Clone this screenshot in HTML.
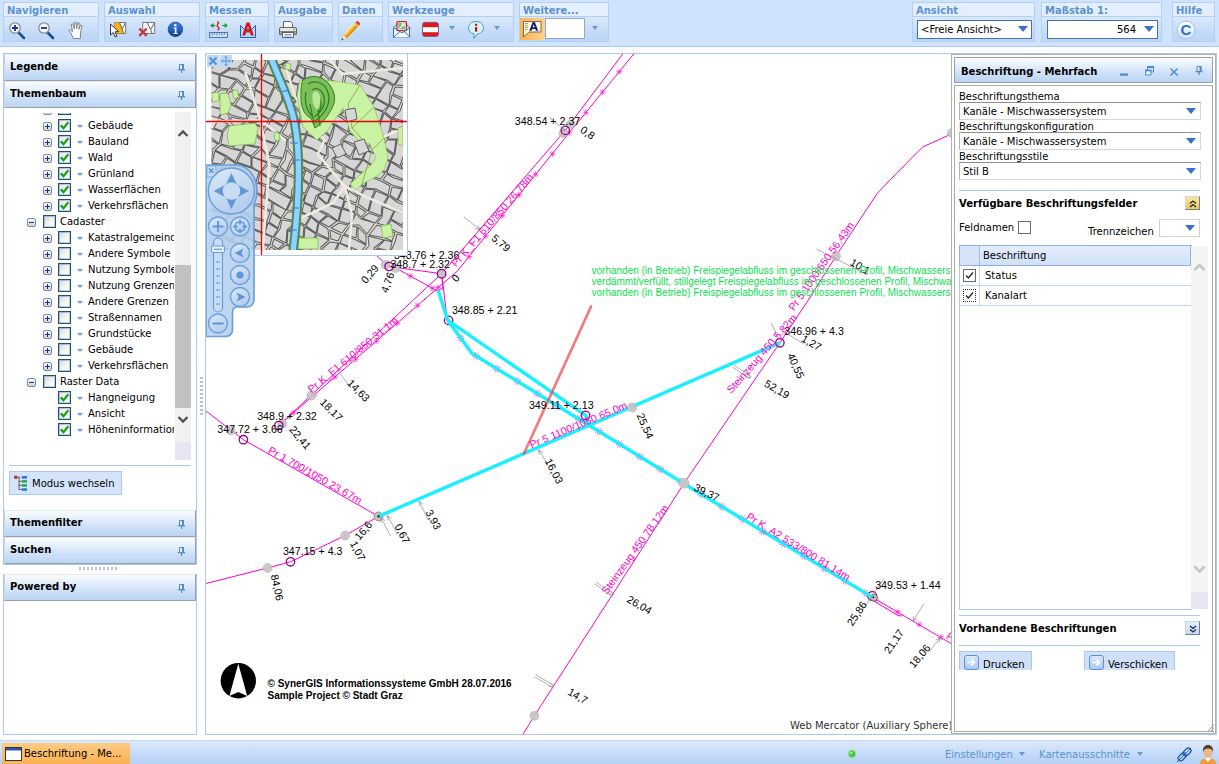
<!DOCTYPE html>
<html lang="de">
<head>
<meta charset="utf-8">
<title>WebOffice - Beschriftung - Mehrfach</title>
<style>
*{box-sizing:border-box;margin:0;padding:0}
html,body{width:1219px;height:764px;overflow:hidden;background:#fff}
body{position:relative;font-family:"DejaVu Sans","Liberation Sans",sans-serif;font-size:10px;color:#000}
.abs{position:absolute}
/* top toolbar */
#top{left:0;top:0;width:1219px;height:47px;background:#d0e3fc;border-bottom:1px solid #a9c9f0}
.grp{position:absolute;top:2px;height:40px;border:1px solid #b4d0f4;background:linear-gradient(#e3effd 0,#e3effd 13px,#dbe9fb 14px,#c3daf7 30px,#bdd6f6 100%)}
.grp .t{position:absolute;left:0;right:0;top:0;height:14px;border-bottom:1px solid #b4d0f4;color:#5c92cf;font-weight:bold;font-size:10px;line-height:13px;padding:1px 0 0 3px;white-space:nowrap;overflow:hidden}
.ico{position:absolute;top:17px;width:20px;height:20px}
/* left panel */
#left{left:3px;top:53px;width:194px;height:682px;border:1px solid #a9c9f0;background:#fff}
.hdr{position:absolute;left:0;width:192px;height:27px;border:1px solid #9a9ea8;border-top-color:#dfe9f7;border-left-color:#c5d6ee;background:linear-gradient(#fbfdff 0,#e6f0fc 30%,#cfe1f8 62%,#bad5f4 100%);font-weight:bold;font-size:10px;line-height:24px;padding-left:5px}
.pin{position:absolute;right:10px;top:9px;width:7px;height:9px}
.row{position:absolute;left:0;height:16px;line-height:16px;white-space:nowrap;font-size:10px}
.cb{position:absolute;width:13px;height:13px;border:1px solid #1c5180;box-shadow:inset 0 0 0 1px rgba(28,81,128,.28);background:linear-gradient(135deg,#d9d9d3,#fff 80%)}
.cb.on{background:linear-gradient(135deg,#e6e6e0,#fff 70%)}
.pm{position:absolute;width:9px;height:9px;border:1px solid #7b8aa5;border-radius:2px;background:linear-gradient(#fff,#c8d2e4)}
.dd{position:absolute;width:0;height:0;border-left:3px solid transparent;border-right:3px solid transparent;border-top:4px solid #5c92cf}
.tdd{position:absolute;width:0;height:0;border-left:3px solid transparent;border-right:3px solid transparent;border-top:3px solid #6b9fdb}
/* map */
#map{left:205px;top:53px;width:1012px;height:682px;border:1px solid #a9c9f0;background:#fff;overflow:hidden}
/* right panel */
#right{left:951px;top:53px;width:264px;height:682px}
/* bottom */
#bot{left:0;top:740px;width:1219px;height:24px;background:linear-gradient(#dce9fb,#b4d0f5);border-top:1px solid #c2d8f5}
.sel{position:absolute;height:19px;border:1px solid #4470b4;background:#fff;font-size:10px;line-height:17px;padding-left:3px;white-space:nowrap}
.sel i{position:absolute;right:3px;top:5px;width:0;height:0;border-left:5px solid transparent;border-right:5px solid transparent;border-top:6px solid #3a6fd0}
</style>
</head>
<body>
<!--TOP-->
<div id="top" class="abs">
 <div class="grp" style="left:3px;width:96px"><div class="t">Navigieren</div>
  <svg class="ico" style="left:3px" viewBox="0 0 20 20"><line x1="11" y1="12" x2="17" y2="18" stroke="#1d4e9e" stroke-width="2.6" stroke-linecap="round"/><circle cx="8" cy="8" r="5.2" fill="#f4f6fa" stroke="#8a8f98" stroke-width="1.3"/><path d="M5 8h6M8 5v6" stroke="#17328f" stroke-width="1.8"/></svg>
  <svg class="ico" style="left:32px" viewBox="0 0 20 20"><line x1="11" y1="12" x2="17" y2="18" stroke="#1d4e9e" stroke-width="2.6" stroke-linecap="round"/><circle cx="8" cy="8" r="5.2" fill="#f4f6fa" stroke="#8a8f98" stroke-width="1.3"/><path d="M5 8h6" stroke="#17328f" stroke-width="1.8"/></svg>
  <svg class="ico" style="left:62px" viewBox="0 0 20 20"><path d="M7.5 18.5 L4.5 12.5 L2.5 10.5 L3.8 9.6 L6.6 11.8 L5.2 4.2 L6.6 3.8 L8.4 9 L8.2 2.4 L9.8 2.2 L10.6 8.8 L11.6 2.8 L13.2 3 L12.9 9.4 L14.6 5 L16 5.6 L14.6 12 L14.4 18.5 Z" fill="#fff" stroke="#777b82" stroke-width="0.9" stroke-linejoin="round"/></svg>
 </div>
 <div class="grp" style="left:104px;width:96px"><div class="t">Auswahl</div>
  <svg class="ico" style="left:4px;top:16px" viewBox="0 0 20 20"><path d="M5.700 3.500h11v11h-11z" fill="#f7f7f7" stroke="#6c6c6c" stroke-width="0.900"/><path d="M5.700 3.500h4.900l3.900 10.800H7.200L5.700 10z" fill="#fbb414"/><path d="M10.600 3.800l2.500 6.200 3.400-6.200M13.100 10l1.400 4.500" stroke="#555" stroke-width="0.900" fill="none"/><path d="M1.500 5v11l2.700-2.500 2 4.500 1.800-.8-2-4.400 3.600-.2z" fill="#fff" stroke="#222" stroke-width="0.900" stroke-linejoin="round"/></svg>
  <svg class="ico" style="left:33px;top:16px" viewBox="0 0 20 20"><path d="M4.700 3.500h12v11h-12z" fill="#f7f7f7" stroke="#6c6c6c" stroke-width="0.900"/><path d="M9.200 3.800l3.400 6.700 3.900-6.700M12.600 10.500l1.500 4" stroke="#555" stroke-width="0.900" fill="none"/><path d="M1.300 9.500l7.400 7.400M8.700 9.500l-7.400 7.400" stroke="#c8353a" stroke-width="2.300"/></svg>
  <svg class="ico" style="left:61px;top:16px" viewBox="0 0 20 20"><defs><linearGradient id="ig" x1="0" y1="0" x2="0" y2="1"><stop offset="0" stop-color="#3b7fdc"/><stop offset="1" stop-color="#0f3f96"/></linearGradient></defs><circle cx="9.400" cy="10.400" r="7.300" fill="url(#ig)" stroke="#0f3f96" stroke-width="0.600"/><circle cx="9.300" cy="6.300" r="1.250" fill="#fff"/><path d="M7.700 8.600h2.800v5.400h1.200v1.100H7.500V14h1.300V9.700H7.700z" fill="#fff"/></svg>
 </div>
 <div class="grp" style="left:205px;width:64px"><div class="t">Messen</div>
  <svg class="ico" style="left:3px" viewBox="0 0 20 20"><path d="M8.500 1.500c3 1.500-2 3.500 0 5s2 2.500 0 3.500" stroke="#d8232a" stroke-width="1.500" fill="none"/><path d="M1 5.500l3.500-2.600v5.200zM19 5.500l-3.500-2.600v5.200z" fill="#1b9a2d"/><path d="M4 5.500h2.500M13 5.500h2.500" stroke="#1b9a2d" stroke-width="1.200"/><rect x="0.500" y="12.500" width="18" height="5" fill="#cfe0f7" stroke="#3f6fb5" stroke-width="0.9"/><path d="M3 12.500v3M5.500 12.500v2M8 12.500v3M10.500 12.500v2M13 12.500v3M15.500 12.500v2" stroke="#3f6fb5" stroke-width="0.8"/></svg>
  <svg class="ico" style="left:32px" viewBox="0 0 20 20"><path d="M2.500 5.500v12h15v-12l-4 4h-7z" fill="#b8d6f3" stroke="#2a5ca8" stroke-width="1"/><path d="M4.200 15.500L8.500 2.500h3l4.300 13h-3l-.9-3H8.100l-.9 3zM8.800 10.200h2.400L10 6z" fill="#d4151c"/></svg>
 </div>
 <div class="grp" style="left:274px;width:59px"><div class="t">Ausgabe</div>
  <svg class="ico" style="left:3px" viewBox="0 0 20 20"><path d="M5.500 1.500h7l2 2v5h-9z" fill="#fff" stroke="#555" stroke-width="0.9"/><rect x="1.500" y="7.500" width="17" height="7" rx="1.500" fill="#e8e6df" stroke="#555" stroke-width="0.9"/><rect x="1.500" y="11.500" width="17" height="3" fill="#a8a59a" stroke="#555" stroke-width="0.6"/><rect x="4.500" y="12.500" width="11" height="5" fill="#fff" stroke="#555" stroke-width="0.9"/><path d="M6.500 14.500h7M6.500 16h7" stroke="#5a8fd6" stroke-width="0.8"/><circle cx="16" cy="9.500" r="0.800" fill="#2fae3a"/></svg>
 </div>
 <div class="grp" style="left:338px;width:45px"><div class="t">Daten</div>
  <svg class="ico" style="left:2px" viewBox="0 0 20 20"><path d="M2.300 15.200L14.800 2.200l3.600 3.400L5.900 18.600z" fill="#f6b320"/><path d="M3.200 14.400L15.600 1.600" stroke="#fde39a" stroke-width="1.600"/><path d="M5 17.800L17.500 4.800" stroke="#d88a10" stroke-width="1.300"/><path d="M14.300 2.700l1.400-1.500c1-.9 4 1.900 3.200 3l-1.400 1.500z" fill="#e8403c"/><path d="M13.300 3.800l3.500 3.300 1-1-3.500-3.300z" fill="#c9c9c9"/><path d="M2.300 15.200l3.600 3.400-5.200 1.600z" fill="#f3dcae"/><path d="M.6 20.200l2-.6-1.500-1.400z" fill="#1b2a50"/></svg>
 </div>
 <div class="grp" style="left:388px;width:126px"><div class="t">Werkzeuge</div>
  <svg class="ico" style="left:3px" viewBox="0 0 20 20"><path d="M1.500 7.500l3-2.700h10l3 2.700v10h-16z" fill="#eef4fd" stroke="#2d5fae" stroke-width="0.900"/><rect x="5" y="1.600" width="9.500" height="9" rx="1" fill="#fff" stroke="#c0272d" stroke-width="1.300"/><rect x="6.300" y="2.900" width="7" height="6.500" fill="#7fb57c"/><path d="M7.500 8.500l4.500-4.500M9.500 4h2.500v2.500" stroke="#f2f8f0" stroke-width="1.300" fill="none"/><path d="M1.500 17.500l6.500-6 2 1.500 2-1.500 6.500 6" fill="#fafcff" stroke="#2d5fae" stroke-width="0.900"/><path d="M1.500 7.500l6.500 4M18.500 7.500l-6.500 4" stroke="#2d5fae" stroke-width="0.900"/></svg>
  <svg class="ico" style="left:32px" viewBox="0 0 20 20"><rect x="1.500" y="2.300" width="16" height="14.200" rx="2.600" fill="#e01a1a" stroke="#6b5b9a" stroke-width="0.800"/><rect x="2" y="7.200" width="15" height="5" fill="#fff"/></svg>
  <div class="dd" style="left:60px;top:23px;border-top-color:#6c98cf"></div>
  <svg class="ico" style="left:77px" viewBox="0 0 20 20"><path d="M10 1.500c4.500 0 7.500 2.800 7.500 6.300 0 3.200-2.700 5.800-6.300 6.200L8 18.500v-4.700C4.600 13.200 2.500 10.800 2.500 7.800 2.500 4.300 5.500 1.500 10 1.500z" fill="#d9f3f7" stroke="#4a9fb5" stroke-width="1"/><rect x="9" y="3.800" width="2.200" height="2" fill="#b4161b"/><rect x="9" y="7" width="2.200" height="4.600" fill="#b4161b"/></svg>
  <div class="dd" style="left:105px;top:23px;border-top-color:#6c98cf"></div>
 </div>
 <div class="grp" style="left:519px;width:90px"><div class="t">Weitere...</div>
  <div class="abs" style="left:0;top:15px;width:25px;height:22px;background:linear-gradient(90deg,#fbb248,#fdd093)"></div>
  <svg class="abs" style="left:3px;top:18px;width:19px;height:17px" viewBox="0 0 19 17"><path d="M.5.500h17.500v10.500H6L.5 16z" fill="#fbf3d3" stroke="#6a644f" stroke-width="0.900"/><path d="M2 2.500h3M2 4.500h3M2 6.500h3M2 8.500h2.500" stroke="#8a8468" stroke-width="0.700"/><path d="M6.300 9.800L9.700 1h2.100l3.400 8.800h-2.200l-.6-1.800H9.100l-.6 1.800zM9.700 6.300h2.100L10.750 3.200z" fill="#141a7a"/></svg>
  <div class="abs" style="left:25px;top:15px;width:40px;height:21px;background:#fff;border:1px solid #8fa9cf"></div>
  <div class="dd" style="left:72px;top:23px;border-top-color:#6c98cf"></div>
 </div>
 <div class="grp" style="left:912px;width:123px"><div class="t">Ansicht</div>
  <div class="sel" style="left:4px;top:17px;width:115px">&lt;Freie Ansicht&gt;<i></i></div>
 </div>
 <div class="grp" style="left:1041px;width:121px"><div class="t">Maßstab 1:</div>
  <div class="sel" style="left:5px;top:17px;width:111px;text-align:right;padding-right:21px">564<i></i></div>
 </div>
 <div class="grp" style="left:1172px;width:43px"><div class="t">Hilfe</div>
  <svg class="abs" style="left:3px;top:17px;width:20px;height:20px" viewBox="0 0 20 20"><defs><linearGradient id="hg" x1="0" y1="0" x2="0" y2="1"><stop offset="0" stop-color="#fff"/><stop offset="1" stop-color="#cfe2fa"/></linearGradient></defs><circle cx="10" cy="10" r="9" fill="url(#hg)" stroke="#9fc0ea" stroke-width="1"/><text x="10" y="15.200" text-anchor="middle" font-family="Liberation Sans, sans-serif" font-weight="bold" font-size="15" fill="#2f6fc9">C</text></svg>
 </div>
</div>
<!--/TOP-->
<!--LEFT-->
<div id="left" class="abs" style="height:512px">
<div class="hdr" style="top:0">Legende<svg class="pin" viewBox="0 0 7 9"><path d="M1.500 5V.5h4V5" stroke="#4f8ad2" stroke-width="1" fill="#eaf2fc"/><rect x="4" y="0" width="2" height="5.500" fill="#4f8ad2"/><rect x="0" y="5" width="7" height="1.300" fill="#4f8ad2"/><rect x="3" y="6" width="1.200" height="3" fill="#4f8ad2"/></svg></div>
<div class="hdr" style="top:27px">Themenbaum<svg class="pin" viewBox="0 0 7 9"><path d="M1.500 5V.5h4V5" stroke="#4f8ad2" stroke-width="1" fill="#eaf2fc"/><rect x="4" y="0" width="2" height="5.500" fill="#4f8ad2"/><rect x="0" y="5" width="7" height="1.300" fill="#4f8ad2"/><rect x="3" y="6" width="1.200" height="3" fill="#4f8ad2"/></svg></div>
<div class="abs" style="left:0;top:59px;width:170px;height:349px;overflow:hidden"><div class="abs" style="left:0;top:-5px;width:170px;height:354px">
<div class="pm" style="left:39px;top:-2px"></div><div class="cb" style="left:54px;top:-6px"></div>
<div class="pm" style="left:39px;top:14px"><b style="position:absolute;left:1px;top:3px;width:5px;height:1px;background:#1a2f6b"></b><b style="position:absolute;left:3px;top:1px;width:1px;height:5px;background:#1a2f6b"></b></div>
<div class="cb on" style="left:54px;top:11px"><svg viewBox="0 0 11 11" style="position:absolute;left:0;top:0;width:11px;height:11px"><path d="M1.800 5.200l2.600 3L9.300 2.200" stroke="#18a018" stroke-width="2.200" fill="none"/></svg></div>
<div class="tdd" style="left:73px;top:17px"></div>
<div class="row" style="left:84px;top:10px">Gebäude</div>
<div class="pm" style="left:39px;top:30px"><b style="position:absolute;left:1px;top:3px;width:5px;height:1px;background:#1a2f6b"></b><b style="position:absolute;left:3px;top:1px;width:1px;height:5px;background:#1a2f6b"></b></div>
<div class="cb on" style="left:54px;top:27px"><svg viewBox="0 0 11 11" style="position:absolute;left:0;top:0;width:11px;height:11px"><path d="M1.800 5.200l2.600 3L9.300 2.200" stroke="#18a018" stroke-width="2.200" fill="none"/></svg></div>
<div class="tdd" style="left:73px;top:33px"></div>
<div class="row" style="left:84px;top:26px">Bauland</div>
<div class="pm" style="left:39px;top:46px"><b style="position:absolute;left:1px;top:3px;width:5px;height:1px;background:#1a2f6b"></b><b style="position:absolute;left:3px;top:1px;width:1px;height:5px;background:#1a2f6b"></b></div>
<div class="cb on" style="left:54px;top:43px"><svg viewBox="0 0 11 11" style="position:absolute;left:0;top:0;width:11px;height:11px"><path d="M1.800 5.200l2.600 3L9.300 2.200" stroke="#18a018" stroke-width="2.200" fill="none"/></svg></div>
<div class="tdd" style="left:73px;top:49px"></div>
<div class="row" style="left:84px;top:42px">Wald</div>
<div class="pm" style="left:39px;top:62px"><b style="position:absolute;left:1px;top:3px;width:5px;height:1px;background:#1a2f6b"></b><b style="position:absolute;left:3px;top:1px;width:1px;height:5px;background:#1a2f6b"></b></div>
<div class="cb on" style="left:54px;top:59px"><svg viewBox="0 0 11 11" style="position:absolute;left:0;top:0;width:11px;height:11px"><path d="M1.800 5.200l2.600 3L9.300 2.200" stroke="#18a018" stroke-width="2.200" fill="none"/></svg></div>
<div class="tdd" style="left:73px;top:65px"></div>
<div class="row" style="left:84px;top:58px">Grünland</div>
<div class="pm" style="left:39px;top:78px"><b style="position:absolute;left:1px;top:3px;width:5px;height:1px;background:#1a2f6b"></b><b style="position:absolute;left:3px;top:1px;width:1px;height:5px;background:#1a2f6b"></b></div>
<div class="cb on" style="left:54px;top:75px"><svg viewBox="0 0 11 11" style="position:absolute;left:0;top:0;width:11px;height:11px"><path d="M1.800 5.200l2.600 3L9.300 2.200" stroke="#18a018" stroke-width="2.200" fill="none"/></svg></div>
<div class="tdd" style="left:73px;top:81px"></div>
<div class="row" style="left:84px;top:74px">Wasserflächen</div>
<div class="pm" style="left:39px;top:94px"><b style="position:absolute;left:1px;top:3px;width:5px;height:1px;background:#1a2f6b"></b><b style="position:absolute;left:3px;top:1px;width:1px;height:5px;background:#1a2f6b"></b></div>
<div class="cb on" style="left:54px;top:91px"><svg viewBox="0 0 11 11" style="position:absolute;left:0;top:0;width:11px;height:11px"><path d="M1.800 5.200l2.600 3L9.300 2.200" stroke="#18a018" stroke-width="2.200" fill="none"/></svg></div>
<div class="tdd" style="left:73px;top:97px"></div>
<div class="row" style="left:84px;top:90px">Verkehrsflächen</div>
<div class="pm" style="left:23px;top:110px"><b style="position:absolute;left:1px;top:3px;width:5px;height:1px;background:#1a2f6b"></b></div>
<div class="cb" style="left:39px;top:107px"></div>
<div class="row" style="left:56px;top:106px">Cadaster</div>
<div class="pm" style="left:39px;top:126px"><b style="position:absolute;left:1px;top:3px;width:5px;height:1px;background:#1a2f6b"></b><b style="position:absolute;left:3px;top:1px;width:1px;height:5px;background:#1a2f6b"></b></div>
<div class="cb" style="left:54px;top:123px"></div>
<div class="tdd" style="left:73px;top:129px"></div>
<div class="row" style="left:84px;top:122px">Katastralgemeinden</div>
<div class="pm" style="left:39px;top:142px"><b style="position:absolute;left:1px;top:3px;width:5px;height:1px;background:#1a2f6b"></b><b style="position:absolute;left:3px;top:1px;width:1px;height:5px;background:#1a2f6b"></b></div>
<div class="cb" style="left:54px;top:139px"></div>
<div class="tdd" style="left:73px;top:145px"></div>
<div class="row" style="left:84px;top:138px">Andere Symbole</div>
<div class="pm" style="left:39px;top:158px"><b style="position:absolute;left:1px;top:3px;width:5px;height:1px;background:#1a2f6b"></b><b style="position:absolute;left:3px;top:1px;width:1px;height:5px;background:#1a2f6b"></b></div>
<div class="cb" style="left:54px;top:155px"></div>
<div class="tdd" style="left:73px;top:161px"></div>
<div class="row" style="left:84px;top:154px">Nutzung Symbole</div>
<div class="pm" style="left:39px;top:174px"><b style="position:absolute;left:1px;top:3px;width:5px;height:1px;background:#1a2f6b"></b><b style="position:absolute;left:3px;top:1px;width:1px;height:5px;background:#1a2f6b"></b></div>
<div class="cb" style="left:54px;top:171px"></div>
<div class="tdd" style="left:73px;top:177px"></div>
<div class="row" style="left:84px;top:170px">Nutzung Grenzen</div>
<div class="pm" style="left:39px;top:190px"><b style="position:absolute;left:1px;top:3px;width:5px;height:1px;background:#1a2f6b"></b><b style="position:absolute;left:3px;top:1px;width:1px;height:5px;background:#1a2f6b"></b></div>
<div class="cb" style="left:54px;top:187px"></div>
<div class="tdd" style="left:73px;top:193px"></div>
<div class="row" style="left:84px;top:186px">Andere Grenzen</div>
<div class="pm" style="left:39px;top:206px"><b style="position:absolute;left:1px;top:3px;width:5px;height:1px;background:#1a2f6b"></b><b style="position:absolute;left:3px;top:1px;width:1px;height:5px;background:#1a2f6b"></b></div>
<div class="cb" style="left:54px;top:203px"></div>
<div class="tdd" style="left:73px;top:209px"></div>
<div class="row" style="left:84px;top:202px">Straßennamen</div>
<div class="pm" style="left:39px;top:222px"><b style="position:absolute;left:1px;top:3px;width:5px;height:1px;background:#1a2f6b"></b><b style="position:absolute;left:3px;top:1px;width:1px;height:5px;background:#1a2f6b"></b></div>
<div class="cb" style="left:54px;top:219px"></div>
<div class="tdd" style="left:73px;top:225px"></div>
<div class="row" style="left:84px;top:218px">Grundstücke</div>
<div class="pm" style="left:39px;top:238px"><b style="position:absolute;left:1px;top:3px;width:5px;height:1px;background:#1a2f6b"></b><b style="position:absolute;left:3px;top:1px;width:1px;height:5px;background:#1a2f6b"></b></div>
<div class="cb" style="left:54px;top:235px"></div>
<div class="tdd" style="left:73px;top:241px"></div>
<div class="row" style="left:84px;top:234px">Gebäude</div>
<div class="pm" style="left:39px;top:254px"><b style="position:absolute;left:1px;top:3px;width:5px;height:1px;background:#1a2f6b"></b><b style="position:absolute;left:3px;top:1px;width:1px;height:5px;background:#1a2f6b"></b></div>
<div class="cb" style="left:54px;top:251px"></div>
<div class="tdd" style="left:73px;top:257px"></div>
<div class="row" style="left:84px;top:250px">Verkehrsflächen</div>
<div class="pm" style="left:23px;top:270px"><b style="position:absolute;left:1px;top:3px;width:5px;height:1px;background:#1a2f6b"></b></div>
<div class="cb" style="left:39px;top:267px"></div>
<div class="row" style="left:56px;top:266px">Raster Data</div>
<div class="cb on" style="left:54px;top:283px"><svg viewBox="0 0 11 11" style="position:absolute;left:0;top:0;width:11px;height:11px"><path d="M1.800 5.200l2.600 3L9.300 2.200" stroke="#18a018" stroke-width="2.200" fill="none"/></svg></div>
<div class="tdd" style="left:73px;top:289px"></div>
<div class="row" style="left:84px;top:282px">Hangneigung</div>
<div class="cb on" style="left:54px;top:299px"><svg viewBox="0 0 11 11" style="position:absolute;left:0;top:0;width:11px;height:11px"><path d="M1.800 5.200l2.600 3L9.300 2.200" stroke="#18a018" stroke-width="2.200" fill="none"/></svg></div>
<div class="tdd" style="left:73px;top:305px"></div>
<div class="row" style="left:84px;top:298px">Ansicht</div>
<div class="cb on" style="left:54px;top:315px"><svg viewBox="0 0 11 11" style="position:absolute;left:0;top:0;width:11px;height:11px"><path d="M1.800 5.200l2.600 3L9.300 2.200" stroke="#18a018" stroke-width="2.200" fill="none"/></svg></div>
<div class="tdd" style="left:73px;top:321px"></div>
<div class="row" style="left:84px;top:314px">Höheninformationen</div>
</div>
</div>
<div class="abs" style="left:171px;top:58px;width:16px;height:330px;background:#f1f1f1"></div>
<div class="abs" style="left:171px;top:211px;width:16px;height:143px;background:#c1c1c1"></div>
<svg class="abs" style="left:171px;top:58px;width:16px;height:334px" viewBox="0 0 16 334"><path d="M3.500 24l4.500-4.500 4.500 4.500M3.500 305l4.500 4.500 4.500-4.500" stroke="#505050" stroke-width="2.300" fill="none"/></svg>
<div class="abs" style="left:171px;top:388px;width:16px;height:18px;background:#e6e6f5"></div>
<div class="abs" style="left:5px;top:411px;width:182px;height:1px;background:#a9c9f0"></div>
<div class="abs" style="left:5px;top:417px;width:113px;height:24px;background:#d3e4fb;border:1px solid #a9c9f0;line-height:24px;padding-left:22px;font-size:10px">Modus wechseln<svg class="abs" style="left:4px;top:3px;width:15px;height:17px" viewBox="0 0 15 17"><rect x="0.500" y="1" width="2.500" height="2.500" fill="#e03030" stroke="#a01818" stroke-width="0.500"/><path d="M3 2.300h3.500M5 2.300v12.200M5 6.300h3M5 10.400h3M5 14.500h3" stroke="#555" stroke-width="0.900" fill="none"/><rect x="8" y="1" width="5" height="2.700" fill="#2f7fe0"/><rect x="8" y="5" width="5" height="2.700" fill="#36a85a"/><rect x="8" y="9.100" width="5" height="2.700" fill="#36a85a"/><rect x="8" y="13.200" width="5" height="2.700" fill="#2f7fe0"/></svg></div>
<div class="hdr" style="top:456px">Themenfilter<svg class="pin" viewBox="0 0 7 9"><path d="M1.500 5V.5h4V5" stroke="#4f8ad2" stroke-width="1" fill="#eaf2fc"/><rect x="4" y="0" width="2" height="5.500" fill="#4f8ad2"/><rect x="0" y="5" width="7" height="1.300" fill="#4f8ad2"/><rect x="3" y="6" width="1.200" height="3" fill="#4f8ad2"/></svg></div>
<div class="hdr" style="top:483px">Suchen<svg class="pin" viewBox="0 0 7 9"><path d="M1.500 5V.5h4V5" stroke="#4f8ad2" stroke-width="1" fill="#eaf2fc"/><rect x="4" y="0" width="2" height="5.500" fill="#4f8ad2"/><rect x="0" y="5" width="7" height="1.300" fill="#4f8ad2"/><rect x="3" y="6" width="1.200" height="3" fill="#4f8ad2"/></svg></div>
</div>
<div class="abs" style="left:79px;top:567px;width:40px;height:3px;background:repeating-linear-gradient(90deg,#b9c3d2 0,#b9c3d2 2px,transparent 2px,transparent 4px)"></div>
<div class="abs" style="left:200px;top:375px;width:3px;height:40px;background:repeating-linear-gradient(0deg,#b9c3d2 0,#b9c3d2 2px,transparent 2px,transparent 4px)"></div>
<div class="abs" style="left:3px;top:574px;width:194px;height:161px;border:1px solid #a9c9f0;background:#fff">
<div class="hdr" style="top:-1px;left:0">Powered by<svg class="pin" viewBox="0 0 7 9"><path d="M1.500 5V.5h4V5" stroke="#4f8ad2" stroke-width="1" fill="#eaf2fc"/><rect x="4" y="0" width="2" height="5.500" fill="#4f8ad2"/><rect x="0" y="5" width="7" height="1.300" fill="#4f8ad2"/><rect x="3" y="6" width="1.200" height="3" fill="#4f8ad2"/></svg></div></div>
<!--/LEFT-->
<!--MAP-->
<div id="map" class="abs">
<svg class="abs" style="left:0;top:0;width:745px;height:680px" viewBox="206 54 745 680" font-family="Liberation Sans, sans-serif" font-size="10.670">
<path d="M623.5 53.0 L565.3 130.4 L441.6 273.7 L280.3 424.0" stroke="#ff00cc" stroke-width="1" fill="none" />
<path d="M634.5 53.0 L574.0 127.0 L457.1 271.3 L278.8 425.5" stroke="#ff00cc" stroke-width="1" fill="none" />
<path d="M621.7 73.5L616.9 69.6M622.4 71.3L616.2 71.9M619.0 68.5L619.6 74.7M604.9 94.1L600.1 90.1M605.6 91.8L599.5 92.4M602.2 89.0L602.8 95.2M588.2 114.6L583.4 110.7M588.8 112.3L582.7 112.9M585.5 109.5L586.1 115.7M571.4 135.1L566.6 131.2M572.1 132.8L565.9 133.5M568.7 130.1L569.3 136.2M554.7 155.7L549.9 151.8M555.4 153.4L549.3 154.1M552.0 150.7L552.7 156.8M538.1 176.3L533.2 172.4M538.7 174.0L532.6 174.7M535.3 171.3L536.0 177.4M521.4 196.9L516.6 193.0M522.1 194.6L515.9 195.2M518.7 191.8L519.3 198.0M504.7 217.5L499.9 213.6M505.4 215.2L499.2 215.8M502.0 212.4L502.6 218.6M488.0 238.1L483.2 234.2M488.7 235.8L482.5 236.4M485.3 233.0L485.9 239.2M471.3 258.6L466.5 254.7M472.0 256.4L465.8 257.0M468.6 253.6L469.3 259.8" stroke="#ff00cc" stroke-width="0.6" fill="none"/>
<path d="M440.2 290.0L436.2 285.3M441.3 287.9L435.1 287.4M438.4 284.6L438.0 290.7M419.6 307.9L415.5 303.2M420.6 305.7L414.4 305.3M417.8 302.4L417.3 308.6M398.9 325.7L394.9 321.0M400.0 323.6L393.8 323.1M397.1 320.3L396.7 326.5M378.3 343.6L374.2 338.9M379.3 341.5L373.2 341.0M376.5 338.1L376.0 344.3M357.6 361.4L353.6 356.7M358.7 359.3L352.5 358.9M355.8 356.0L355.4 362.2M337.0 379.3L332.9 374.6M338.0 377.2L331.9 376.7M335.2 373.9L334.7 380.0M316.3 397.1L312.3 392.5M317.4 395.0L311.2 394.6M314.5 391.7L314.1 397.9M295.7 415.0L291.6 410.3M296.7 412.9L290.6 412.4M293.9 409.6L293.4 415.8" stroke="#ff00cc" stroke-width="0.6" fill="none"/>
<path d="M206.0 411.0 L243.4 439.7 L378.5 516.4" stroke="#ff00cc" stroke-width="1" fill="none" />
<path d="M378.5 516.4 L345.1 535.5 L290.5 561.8 L267.6 567.9 L206.0 583.5" stroke="#ff00cc" stroke-width="1" fill="none" />
<path d="M389.1 266.5 L441.6 273.7" stroke="#ff00cc" stroke-width="1" fill="none" />
<path d="M370.0 250.0 L389.1 266.5" stroke="#ff00cc" stroke-width="1" fill="none" />
<path d="M399.4 270.0 L437.4 291.0" stroke="#ff00cc" stroke-width="1" fill="none" />
<path d="M412.0 273.4L409.0 278.9M409.7 273.2L411.4 279.1M407.5 277.0L413.5 275.3M433.9 285.5L430.9 291.0M431.5 285.3L433.3 291.2M429.4 289.1L435.4 287.4" stroke="#ff00cc" stroke-width="0.6" fill="none"/>
<path d="M441.6 273.7 L447.3 320.5" stroke="#ff00cc" stroke-width="1" fill="none" />
<path d="M437.4 291.0 L443.0 288.0 L441.6 273.7" stroke="#ff00cc" stroke-width="1" fill="none" />
<path d="M522.5 735.0 L534.4 715.8 L684.1 483.2 L779.9 342.8 L808.3 300.0 L835.9 256.2 L877.1 193.5 L896.2 173.7 L922.5 147.1 L951.0 134.1" stroke="#ff00cc" stroke-width="1" fill="none" />
<path d="M872.6 597.4 L951.0 643.5" stroke="#ff00cc" stroke-width="1" fill="none" />
<path d="M873.0 600.5 L898.0 615.5 L902.0 616.0" stroke="#ff00cc" stroke-width="1" fill="none" />
<path d="M877.6 596.7L874.5 602.1M875.3 596.4L876.9 602.4M873.1 600.2L879.1 598.6M899.2 609.3L896.1 614.7M896.9 609.0L898.5 615.0M894.7 612.8L900.7 611.2M920.8 621.9L917.7 627.2M918.5 621.6L920.1 627.5M916.3 625.3L922.3 623.8M942.4 634.4L939.3 639.8M940.1 634.1L941.7 640.1M937.9 637.9L943.9 636.3" stroke="#ff00cc" stroke-width="0.6" fill="none"/>
<path d="M464.0 335.8L457.6 340.5M461.4 334.2L460.2 342.1M456.8 337.5L464.7 338.8M478.5 352.6L474.3 359.4M475.4 352.1L477.3 359.9M472.5 356.9L480.3 355.1M498.9 365.2L494.7 372.0M495.9 364.7L497.7 372.5M492.9 369.5L500.7 367.6M519.3 377.7L515.2 384.6M516.3 377.3L518.2 385.0M513.4 382.1L521.1 380.2M539.8 390.3L535.6 397.1M536.8 389.8L538.6 397.6M533.8 394.6L541.6 392.8M560.2 402.9L556.0 409.7M557.2 402.4L559.1 410.2M554.3 407.2L562.0 405.4M580.7 415.4L576.5 422.3M577.7 415.0L579.5 422.7M574.7 419.8L582.5 417.9M601.1 428.0L596.9 434.8M598.1 427.5L600.0 435.3M595.1 432.4L602.9 430.5M621.6 440.6L617.4 447.4M618.6 440.1L620.4 447.9M615.6 444.9L623.4 443.1M642.0 453.2L637.8 460.0M639.0 452.7L640.9 460.5M636.0 457.5L643.8 455.6M662.5 465.7L658.3 472.5M659.4 465.2L661.3 473.0M656.5 470.1L664.3 468.2M682.9 478.3L678.7 485.1M679.9 477.8L681.7 485.6M676.9 482.6L684.7 480.8M703.3 490.8L699.2 497.7M700.3 490.4L702.2 498.1M697.4 495.2L705.1 493.3M723.9 503.2L719.8 510.1M720.9 502.8L722.8 510.5M717.9 507.6L725.7 505.7M744.5 515.6L740.3 522.4M741.4 515.1L743.4 522.9M738.5 520.0L746.3 518.1M765.0 528.0L760.9 534.8M762.0 527.5L763.9 535.3M759.1 532.4L766.8 530.4M785.6 540.3L781.5 547.2M782.5 539.9L784.5 547.7M779.6 544.7L787.4 542.8M806.1 552.7L802.0 559.6M803.1 552.3L805.0 560.0M800.2 557.1L808.0 555.2M826.7 565.1L822.6 572.0M823.7 564.6L825.6 572.4M820.8 569.5L828.5 567.6M847.3 577.5L843.1 584.3M844.2 577.0L846.2 584.8M841.3 581.9L849.1 579.9M867.8 589.9L863.7 596.7M864.8 589.4L866.7 597.2M861.9 594.2L869.6 592.3" stroke="#ff00cc" stroke-width="0.6" fill="none"/>
<circle cx="448.6" cy="320.4" r="4.2" fill="none" stroke="#990088" stroke-width="1.3"/>
<circle cx="872.3000000000001" cy="596.1" r="4.4" fill="none" stroke="#990088" stroke-width="1.3"/>
<circle cx="378.5" cy="516.4" r="4.400" fill="#c4c4c4" stroke="#8a8a8a" stroke-width="1"/>
<circle cx="873.8000000000001" cy="597.6999999999999" r="3.400" fill="#c4c4c4" stroke="#666" stroke-width="0.900"/>
<path d="M438.2 290.5 L447.8 320.4" stroke="#19f0ff" stroke-width="3.4" fill="none" />
<path d="M447.8 320.4 L585.6 415.4 L589.5 426.0" stroke="#19f0ff" stroke-width="3.4" fill="none" stroke-linejoin="round"/>
<path d="M447.8 320.4 L471.8 353.2 L700.0 493.5 L872.6 597.4" stroke="#19f0ff" stroke-width="3.4" fill="none" stroke-linejoin="round"/>
<path d="M378.5 516.4 L779.9 342.8" stroke="#19f0ff" stroke-width="3.4" fill="none" />
<path d="M591.1 306.4 L523.8 454.0" stroke="#f04c4c" stroke-width="2.6" fill="none" opacity="0.75" stroke-linecap="round"/>
<circle cx="385.6" cy="264.8" r="4.5" fill="#c6c6c6" fill-opacity="0.92" stroke="#b0b0b0" stroke-width="0.6"/>
<circle cx="395.4" cy="268" r="4.5" fill="#c6c6c6" fill-opacity="0.92" stroke="#b0b0b0" stroke-width="0.6"/>
<circle cx="570.6" cy="124.1" r="4.3" fill="#c6c6c6" fill-opacity="0.92" stroke="#b0b0b0" stroke-width="0.6"/>
<circle cx="563.3" cy="133.3" r="4.3" fill="#c6c6c6" fill-opacity="0.92" stroke="#b0b0b0" stroke-width="0.6"/>
<circle cx="282.1" cy="423.8" r="4.5" fill="#c6c6c6" fill-opacity="0.92" stroke="#b0b0b0" stroke-width="0.6"/>
<circle cx="311.3" cy="395.6" r="4.5" fill="#c6c6c6" fill-opacity="0.92" stroke="#b0b0b0" stroke-width="0.6"/>
<circle cx="230.8" cy="430.4" r="4.3" fill="#c6c6c6" fill-opacity="0.92" stroke="#b0b0b0" stroke-width="0.6"/>
<circle cx="345.1" cy="535.5" r="4.5" fill="#c6c6c6" fill-opacity="0.92" stroke="#b0b0b0" stroke-width="0.6"/>
<circle cx="267.6" cy="567.9" r="4.5" fill="#c6c6c6" fill-opacity="0.92" stroke="#b0b0b0" stroke-width="0.6"/>
<circle cx="632.1" cy="407.5" r="4.5" fill="#c6c6c6" fill-opacity="0.92" stroke="#b0b0b0" stroke-width="0.6"/>
<circle cx="684.1" cy="483.2" r="5" fill="#c6c6c6" fill-opacity="0.92" stroke="#b0b0b0" stroke-width="0.6"/>
<circle cx="835.9" cy="256.2" r="4.5" fill="#c6c6c6" fill-opacity="0.92" stroke="#b0b0b0" stroke-width="0.6"/>
<circle cx="534.4" cy="715.8" r="4.5" fill="#c6c6c6" fill-opacity="0.92" stroke="#b0b0b0" stroke-width="0.6"/>
<circle cx="952" cy="133" r="4.5" fill="#c6c6c6" fill-opacity="0.92" stroke="#b0b0b0" stroke-width="0.6"/>
<circle cx="389.1" cy="266.5" r="4.2" fill="none" stroke="#990088" stroke-width="1.3"/>
<circle cx="441.6" cy="273.7" r="4.3" fill="#c4c4c4" stroke="#990088" stroke-width="1.3"/>
<circle cx="565.3" cy="130.4" r="4.2" fill="none" stroke="#990088" stroke-width="1.3"/>
<circle cx="278.8" cy="425.5" r="4.2" fill="none" stroke="#990088" stroke-width="1.3"/>
<circle cx="243.4" cy="439.7" r="4.2" fill="none" stroke="#990088" stroke-width="1.3"/>
<circle cx="290.5" cy="561.8" r="4.2" fill="none" stroke="#990088" stroke-width="1.3"/>
<circle cx="585.6" cy="415.4" r="4.2" fill="none" stroke="#990088" stroke-width="1.3"/>
<circle cx="779.9" cy="342.8" r="4.2" fill="none" stroke="#990088" stroke-width="1.3"/>
<circle cx="378.5" cy="516.4" r="1.100" fill="#000"/><circle cx="873.4" cy="597.4" r="0.900" fill="#000"/>
<path d="M549.6 117.6L565.0 130.6M565.0 130.6L563.0 126.0M565.0 130.6L560.2 129.4" stroke="#8c8c8c" stroke-width="0.7" fill="none"/>
<path d="M463.8 217.0L480.0 229.7M480.0 229.7L477.8 225.2M480.0 229.7L475.1 228.6" stroke="#8c8c8c" stroke-width="0.7" fill="none"/>
<path d="M390.5 536.1L381.0 517.6M381.0 517.6L381.1 522.6M381.0 517.6L385.0 520.6" stroke="#8c8c8c" stroke-width="0.7" fill="none"/>
<path d="M396.6 532.8L387.6 515.6M387.6 515.6L387.8 520.6M387.6 515.6L391.6 518.6" stroke="#8c8c8c" stroke-width="0.7" fill="none"/>
<path d="M428.2 519.7L419.2 501.2M419.2 501.2L419.2 506.2M419.2 501.2L423.1 504.3" stroke="#8c8c8c" stroke-width="0.7" fill="none"/>
<path d="M547.6 464.0L538.6 449.8M538.6 449.8L539.2 454.8M538.6 449.8L542.8 452.4" stroke="#8c8c8c" stroke-width="0.7" fill="none"/>
<path d="M734.2 365.3L751.4 376.8M732.8 367.3L750.0 378.8M750.7 377.8L748.2 373.5M750.7 377.8L745.7 377.1" stroke="#8c8c8c" stroke-width="0.7" fill="none"/>
<path d="M596.3 582.2L614.2 594.2M594.9 584.2L612.8 596.2M613.5 595.2L611.0 590.9M613.5 595.2L608.5 594.5" stroke="#8c8c8c" stroke-width="0.7" fill="none"/>
<path d="M535.6 674.6L554.4 685.9M534.4 676.6L553.2 687.9M553.8 686.9L551.1 682.7M553.8 686.9L548.8 686.4" stroke="#8c8c8c" stroke-width="0.7" fill="none"/>
<path d="M816.5 249.0 L863.6 273.0" stroke="#8c8c8c" stroke-width="0.7" fill="none" />
<path d="M771.4 323.2 L779.0 340.0" stroke="#8c8c8c" stroke-width="0.7" fill="none" />
<path d="M786.0 333.0 L803.0 343.5" stroke="#8c8c8c" stroke-width="0.7" fill="none" />
<path d="M339.9 373.5 L349.5 386.0" stroke="#8c8c8c" stroke-width="0.7" fill="none" />
<path d="M923.6 604.2L913.0 621.2M913.0 621.2L917.2 618.5M913.0 621.2L913.5 616.2" stroke="#8c8c8c" stroke-width="0.7" fill="none"/>
<path d="M929.5 651.3L940.1 637.7M940.1 637.7L935.6 639.9M940.1 637.7L939.0 642.6" stroke="#8c8c8c" stroke-width="0.7" fill="none"/>
<path d="M884.0 578.5 L862.0 611.0" stroke="#8c8c8c" stroke-width="0.7" fill="none" />
<text x="514.8" y="124.8">348.54 + 2.37</text>
<text x="393.9" y="259.1">348.76 + 2.36</text>
<text x="390.4" y="267.8">348.7 + 2.32</text>
<text x="451.9" y="313.6">348.85 + 2.21</text>
<text x="257.2" y="420">348.9 + 2.32</text>
<text x="217.3" y="432.8">347.72 + 3.66</text>
<text x="282.9" y="555.2">347.15 + 4.3</text>
<text x="528.9" y="408.5">349.11 + 2.13</text>
<text x="784.3" y="335.4">346.96 + 4.3</text>
<text x="875.2" y="589.3">349.53 + 1.44</text>
<text text-anchor="middle" transform="translate(587.6 132.7) rotate(35)" y="3.700">0,8</text>
<text text-anchor="middle" transform="translate(501 243) rotate(40)" y="3.700">5,79</text>
<text text-anchor="middle" transform="translate(369.8 274) rotate(-50)" y="3.700">0,29</text>
<text text-anchor="middle" transform="translate(387.6 282.5) rotate(-70)" y="3.700">4,76</text>
<text text-anchor="middle" transform="translate(455.5 278) rotate(-50)" y="3.700">0</text>
<text text-anchor="middle" transform="translate(358.5 390.5) rotate(45)" y="3.700">14,63</text>
<text text-anchor="middle" transform="translate(331.3 409.8) rotate(45)" y="3.700">18,17</text>
<text text-anchor="middle" transform="translate(300.2 437.7) rotate(50)" y="3.700">22,41</text>
<text text-anchor="middle" transform="translate(277.2 587.4) rotate(78)" y="3.700">84,06</text>
<text text-anchor="middle" transform="translate(357.8 550.9) rotate(62)" y="3.700">1,07</text>
<text text-anchor="middle" transform="translate(363.4 530.4) rotate(-50)" y="3.700">16,6</text>
<text text-anchor="middle" transform="translate(402.3 533.6) rotate(62)" y="3.700">0,67</text>
<text text-anchor="middle" transform="translate(433.5 519.7) rotate(62)" y="3.700">3,93</text>
<text text-anchor="middle" transform="translate(554.1 471.1) rotate(62)" y="3.700">16,03</text>
<text text-anchor="middle" transform="translate(645.2 426) rotate(66)" y="3.700">25,54</text>
<text text-anchor="middle" transform="translate(706.6 492.4) rotate(25)" y="3.700">39,37</text>
<text text-anchor="middle" transform="translate(811.4 342.8) rotate(30)" y="3.700">1,27</text>
<text text-anchor="middle" transform="translate(795.8 365.8) rotate(66)" y="3.700">40,55</text>
<text text-anchor="middle" transform="translate(777 389.3) rotate(30)" y="3.700">52,19</text>
<text text-anchor="middle" transform="translate(860.1 266.5) rotate(30)" y="3.700">10,1</text>
<text text-anchor="middle" transform="translate(639.4 604.9) rotate(30)" y="3.700">26,04</text>
<text text-anchor="middle" transform="translate(577.8 696) rotate(30)" y="3.700">14,7</text>
<text text-anchor="middle" transform="translate(856.9 613.6) rotate(-56)" y="3.700">25,86</text>
<text text-anchor="middle" transform="translate(893.8 641.5) rotate(-56)" y="3.700">21,17</text>
<text text-anchor="middle" transform="translate(919.7 656.1) rotate(-50)" y="3.700">18,06</text>
<text x="311.5" y="393.5" fill="#ff00cc" transform="rotate(-39.5 311.5 393.5)">Pr K_F1 610/850 31.1m</text>
<text x="456" y="267.5" fill="#ff00cc" transform="rotate(-49 456 267.5)">Pr K_F1 610/850 26.78m</text>
<text x="267.3" y="452.5" fill="#ff00cc" transform="rotate(29.4 267.3 452.5)">Pr 1 700/1050 23.67m</text>
<text x="531.5" y="448.5" fill="#ff00cc" transform="rotate(-22.7 531.5 448.5)">Pr 5 1100/1050 65.0m</text>
<text x="731.5" y="394" fill="#ff00cc" transform="rotate(-49 731.5 394)">Steinzeug 450 5.82m</text>
<text x="794" y="311.5" fill="#ff00cc" transform="rotate(-55 794 311.5)">Pr 5 1000/650 56.43m</text>
<text x="607" y="595" fill="#ff00cc" transform="rotate(-54.4 607 595)">Steinzeug 450 78.12m</text>
<text x="745.5" y="518.5" fill="#ff00cc" transform="rotate(31.6 745.5 518.5)">Pr K_A2 533/800 81.14m</text>
<text x="945.5" y="638" fill="#ff00cc" transform="rotate(31 945.5 638)">Pr</text>
<g fill="#0be050" font-size="10">
<text x="591.500" y="274">vorhanden (in Betrieb) Freispiegelabfluss im geschlossenen Profil, Mischwassersystem</text>
<text x="591.500" y="285">verdämmt/verfüllt, stillgelegt Freispiegelabfluss im geschlossenen Profil, Mischwassersystem</text>
<text x="591.500" y="296">vorhanden (in Betrieb) Freispiegelabfluss im geschlossenen Profil, Mischwassersystem</text>
</g>
<circle cx="238.300" cy="680.700" r="17.700" fill="#000"/><path d="M238.300 663.800L247.200 696L238.300 692L229.400 696Z" fill="#fff"/>
<g font-weight="bold" font-size="10"><text x="267.500" y="687.400">© SynerGIS Informationssysteme GmbH 28.07.2016</text><text x="267.500" y="699.400">Sample Project © Stadt Graz</text></g>
<text x="790" y="729" font-family="DejaVu Sans, sans-serif" font-size="10" fill="#333">Web Mercator (Auxiliary Sphere)</text>
</svg>
<!--OVERVIEW-->
<div class="abs" style="left:0;top:0;width:202px;height:202px;background:#fff;border-right:1px solid #a9c9f0;border-bottom:1px solid #a9c9f0;overflow:hidden">
<svg class="abs" style="left:0;top:0;width:201px;height:201px" viewBox="206 54 201 201">
<defs><clipPath id="ovc"><rect x="211.500" y="60" width="191.500" height="190"/></clipPath></defs>
<g clip-path="url(#ovc)">
<rect x="211" y="59" width="193" height="192" fill="#e6e2d6"/>
<path d="M209 45L221 51L216 61L205 53ZM204 54L215 62L208 70L202 66ZM223 52L233 57L228 69L220 74L209 71L217 63ZM208 72L219 75L219 88L209 81ZM209 83L218 88L214 93L204 92ZM236 46L247 53L243 62L238 68L229 69L234 57ZM229 70L238 70L250 78L245 86L237 79L221 75ZM220 75L236 80L229 89L220 88ZM220 90L228 90L223 99L216 94ZM214 95L223 101L223 109L208 106ZM208 106L223 110L218 118L204 114ZM200 124L213 129L222 132L219 144L208 135L201 133ZM201 134L207 138L218 144L213 149L202 148L196 144ZM248 54L256 56L253 66L245 62ZM244 64L252 68L251 77L239 69ZM237 81L244 88L240 95L231 89ZM230 91L239 96L233 104L225 100ZM224 101L234 106L247 113L246 119L231 115L225 110ZM224 111L229 116L229 122L219 118ZM218 120L228 124L222 131L214 128ZM202 150L213 151L211 162L201 156ZM197 171L207 172L216 176L216 186L204 179L193 175ZM257 56L266 61L262 72L255 67ZM254 68L262 73L259 78L252 78ZM252 79L259 79L254 88L246 87ZM246 89L253 90L253 102L242 95ZM241 96L253 103L248 112L235 105ZM231 117L245 120L237 129L231 123ZM229 125L236 131L237 137L232 147L221 144L223 132ZM221 145L232 149L241 151L235 162L227 156L215 150ZM215 151L226 157L221 164L212 163ZM212 164L221 165L217 175L208 170ZM204 181L216 186L212 195L198 191ZM274 56L286 61L280 65L269 61ZM268 62L280 66L276 76L263 73ZM264 74L275 77L274 85L261 79ZM260 79L274 86L269 97L255 89ZM255 90L268 98L265 107L254 103ZM254 104L265 108L275 112L269 119L261 114L249 113ZM249 114L260 115L254 123L247 120ZM246 121L254 124L253 133L245 144L238 137L238 131ZM238 138L244 145L242 150L233 148ZM227 158L235 163L232 174L223 165ZM222 166L231 175L230 184L219 176ZM218 177L230 185L225 189L218 186ZM217 187L224 190L219 200L214 196ZM213 197L218 201L218 211L205 207ZM205 208L217 212L229 215L221 225L212 219L204 216ZM288 48L299 52L298 64L295 72L282 65L288 61ZM281 67L294 73L290 82L277 77ZM277 77L290 83L298 85L296 99L283 92L276 86ZM275 87L281 93L282 100L275 111L266 107L270 98ZM261 116L269 119L265 127L255 124ZM255 125L264 128L261 138L255 133ZM254 134L261 140L275 144L268 155L260 147L245 144ZM245 145L259 148L251 156L243 151ZM242 152L251 157L251 167L237 162ZM236 163L251 168L259 172L256 182L245 175L233 174ZM233 176L244 177L242 187L232 185ZM231 186L242 189L235 193L226 190ZM225 191L234 195L231 206L220 200ZM219 201L231 207L229 214L219 211ZM212 220L222 227L237 230L231 240L220 233L210 231ZM209 233L218 235L213 245L206 241ZM300 52L311 61L323 63L322 72L307 66L300 64ZM299 65L305 68L304 79L296 73ZM295 74L304 80L298 84L291 82ZM282 93L296 100L291 104L289 115L276 111L283 101ZM276 112L288 117L284 126L271 119ZM271 120L283 127L280 133L267 128ZM266 129L280 134L275 143L262 139ZM261 149L268 157L282 159L278 167L268 162L253 157ZM252 157L267 163L260 172L252 167ZM245 177L256 183L250 190L249 204L236 194L243 189ZM236 195L248 204L241 210L233 206ZM232 208L241 212L241 220L238 229L223 225L231 215ZM220 235L231 242L239 245L239 254L228 249L215 247ZM214 248L227 250L221 260L218 269L207 263L211 255ZM316 48L328 52L323 62L312 60ZM306 68L322 73L316 85L305 80ZM305 81L315 86L311 93L300 85ZM299 86L310 94L304 102L297 99ZM297 101L303 104L301 112L293 104ZM292 105L300 113L300 120L290 116ZM289 118L300 121L293 132L288 137L282 133L286 127ZM281 135L287 139L286 148L283 158L269 155L277 145ZM268 165L278 168L271 179L261 172ZM260 173L271 180L267 185L258 182ZM258 183L266 187L264 196L252 190ZM252 191L264 198L272 202L271 211L259 204L250 204ZM250 206L258 206L270 212L267 221L254 217L243 211ZM242 212L251 218L251 227L243 220ZM242 221L250 229L244 236L239 230ZM238 231L244 237L240 244L232 241ZM333 47L343 47L337 56L336 67L325 62L330 52ZM324 64L335 69L330 79L324 72ZM323 74L329 80L325 84L317 85ZM317 86L325 86L324 95L312 94ZM312 95L323 96L315 104L305 103ZM305 104L315 105L311 114L302 113ZM302 114L311 115L308 125L302 120ZM301 121L307 126L306 134L295 133ZM295 134L306 135L301 145L294 155L288 148L288 139ZM287 150L293 157L290 162L286 172L280 167L285 160ZM279 169L285 174L285 185L273 180ZM272 181L284 186L279 191L268 186ZM268 187L279 193L291 199L286 210L273 202L265 197ZM253 219L267 222L264 233L252 228ZM252 229L264 234L272 237L270 245L257 242L246 237ZM245 237L255 242L251 249L241 245ZM241 245L251 251L263 256L258 266L250 258L240 255ZM344 48L353 52L350 60L339 56ZM339 57L350 63L362 71L357 79L346 73L337 68ZM336 69L344 75L342 84L331 80ZM331 81L342 85L339 91L326 86ZM326 87L338 92L334 101L326 95ZM324 97L333 103L330 112L324 120L313 114L317 106ZM312 116L323 122L323 130L309 126ZM309 126L323 131L319 139L307 134ZM307 135L319 140L327 145L326 156L312 148L303 145ZM302 146L312 149L325 156L321 166L309 162L295 156ZM295 156L308 163L320 166L312 172L306 168L293 162ZM292 163L305 169L301 179L287 173ZM286 175L301 180L292 189L291 198L280 191L286 186ZM273 203L286 210L281 218L273 212ZM272 213L281 219L278 228L269 222ZM268 223L278 229L273 237L265 233ZM257 244L269 246L263 254L253 250ZM361 46L369 48L380 53L380 65L366 56L355 52ZM355 53L365 57L363 71L351 61ZM346 75L357 81L354 87L344 85ZM343 86L354 88L364 94L361 103L349 95L341 92ZM340 93L347 95L347 106L335 102ZM335 103L346 107L340 115L332 112ZM332 113L340 117L349 123L348 132L335 124L325 122ZM324 122L334 125L330 136L325 130ZM324 132L330 137L327 144L321 139ZM306 170L312 174L310 184L303 179ZM302 180L309 185L305 193L294 190ZM294 191L305 195L303 201L292 199ZM292 200L302 203L300 211L287 210ZM288 212L300 212L295 221L283 218ZM282 220L295 222L287 230L286 243L274 237L280 229ZM274 239L284 244L278 249L272 245ZM271 247L278 251L276 261L265 255ZM366 58L379 66L372 74L365 71ZM364 72L371 76L368 82L359 80ZM359 81L368 84L381 89L375 98L365 94L356 88ZM348 97L361 105L355 111L350 121L341 115L348 108ZM335 125L347 134L341 140L341 151L329 144L332 137ZM328 146L340 153L332 159L333 168L322 165L328 157ZM322 167L333 170L325 177L314 173ZM314 174L324 179L322 190L311 185ZM310 186L322 192L316 196L313 206L304 202L306 195ZM304 203L312 207L310 216L302 212ZM301 213L310 217L305 225L297 221ZM297 223L304 226L303 238L289 230ZM288 230L302 240L311 243L309 252L294 247L287 244ZM286 245L293 248L290 254L279 250ZM382 54L393 62L390 70L381 65ZM381 66L390 72L400 75L394 85L387 80L373 76ZM373 76L386 81L381 88L369 83ZM365 95L375 99L370 106L363 104ZM362 105L370 107L383 112L380 121L369 118L357 111ZM357 112L368 120L379 121L376 132L365 125L351 123ZM351 123L364 127L376 132L372 141L360 136L349 133ZM349 134L359 137L372 142L366 149L356 145L343 140ZM343 141L355 147L350 157L342 151ZM341 153L350 159L362 160L354 170L345 165L334 159ZM334 161L343 166L343 174L335 169ZM334 171L343 175L337 186L326 178ZM326 179L336 187L331 193L324 191ZM323 192L331 194L327 204L318 196ZM318 197L327 205L341 209L338 221L328 214L314 207ZM313 208L327 215L319 222L311 216ZM311 217L318 223L316 233L306 226ZM305 227L316 234L312 242L304 239ZM294 248L309 253L321 255L311 267L303 263L291 255ZM402 44L412 45L406 55L406 65L395 61L399 50ZM394 63L406 67L400 74L391 71ZM387 82L393 86L390 94L389 105L376 98L382 89ZM376 99L388 106L383 111L371 107ZM356 147L366 150L362 159L352 158ZM345 166L354 171L353 178L345 175ZM344 176L353 179L348 189L344 199L332 193L338 187ZM332 194L344 200L342 208L328 204ZM328 216L337 221L329 227L320 222ZM319 223L328 229L329 239L317 233ZM317 235L329 240L321 247L321 254L311 252L313 243ZM407 67L415 68L412 77L401 75ZM401 76L412 78L408 86L395 85ZM395 87L407 88L403 98L393 94ZM392 95L402 100L398 109L390 105ZM389 106L398 110L392 118L385 112ZM384 113L391 119L390 127L387 138L378 132L381 122ZM378 134L385 139L381 145L375 141ZM374 142L381 147L381 155L367 150ZM367 151L381 156L374 166L363 159ZM363 160L373 167L367 174L356 170ZM355 171L366 175L365 187L354 178ZM353 180L364 188L359 196L350 189ZM349 191L358 197L356 203L346 199ZM345 201L356 205L355 212L343 208ZM342 209L355 213L349 224L339 221ZM339 223L348 225L342 233L331 228ZM330 230L341 235L338 241L331 239ZM330 242L338 243L334 253L330 260L323 254L323 248ZM404 100L415 106L411 113L407 122L393 118L400 111ZM392 119L407 124L404 131L391 128ZM391 129L404 132L410 139L409 145L398 139L388 139ZM387 140L396 140L394 154L383 146ZM382 147L393 155L390 161L382 155ZM382 157L390 162L386 172L375 167ZM375 168L385 173L381 179L368 175ZM367 176L381 181L390 186L388 195L376 189L366 188ZM365 189L375 190L371 199L368 211L358 204L360 197ZM357 206L366 212L361 217L357 213ZM356 214L361 219L375 223L367 234L359 225L350 225ZM350 226L357 227L356 238L344 234ZM343 235L356 240L366 245L361 252L353 248L340 243ZM339 243L352 249L344 255L336 253ZM408 125L415 129L411 137L406 131ZM397 140L410 146L403 157L400 166L391 161L395 154ZM391 162L400 168L413 173L407 181L395 176L387 173ZM387 174L394 178L407 182L402 188L392 185L383 180ZM376 191L388 196L382 206L381 216L369 211L372 200ZM369 213L380 217L375 223L362 218ZM358 227L366 235L366 244L358 239ZM354 250L361 255L375 257L369 266L360 264L346 256ZM405 158L415 164L414 172L401 167ZM392 187L402 189L397 200L390 195ZM389 196L397 202L410 208L407 214L395 209L384 206ZM383 207L394 211L390 219L386 226L377 223L382 217ZM377 225L385 228L395 233L392 241L385 238L369 235ZM368 236L384 240L374 248L376 256L363 252L369 246ZM408 183L418 189L413 193L411 207L398 200L403 189ZM395 211L407 215L402 225L391 219ZM391 220L402 227L415 230L408 236L397 232L387 227ZM385 240L392 242L390 251L377 248ZM376 249L389 252L384 260L377 257ZM397 234L407 237L406 249L399 256L391 251L395 242Z" fill="#d6d6d6" stroke="#5e5e5e" stroke-width="1.050" stroke-linejoin="round"/>
<path d="M285.5 66 L294.9 96.3 L307 116.4 L324.4 140.5 L317.7 154 L344.5 186.2 L366 196.9 L403 213" stroke="#efebe0" stroke-width="2.600" fill="none" stroke-linejoin="round"/>
<path d="M212 121.8 L261.3 120.4 L285.5 140.5" stroke="#efebe0" stroke-width="2.600" fill="none" stroke-linejoin="round"/>
<path d="M245.2 72 L260 119 L269.4 164.7 L262.7 250" stroke="#efebe0" stroke-width="2.600" fill="none" stroke-linejoin="round"/>
<path d="M376.7 140.5 L392.8 132.5 L403 129.8" stroke="#efebe0" stroke-width="2.600" fill="none" stroke-linejoin="round"/>
<path d="M344.5 186.2 L333.8 202.3 L312.3 213 L298.9 218.4" stroke="#efebe0" stroke-width="2.600" fill="none" stroke-linejoin="round"/>
<path d="M330 60 L342 74 L403 68" stroke="#efebe0" stroke-width="2.600" fill="none" stroke-linejoin="round"/>
<path d="M344.5 186.2 L352 215 L349 250" stroke="#efebe0" stroke-width="2.600" fill="none" stroke-linejoin="round"/>
<path d="M334 81L360 85L374 107L384 138L388 158L384 170L374 178L362 184L356 190L350 184L370 166L376 158L370 144L358 140L350 131L343 108L336 118L327 131L317 140L303 127L297 95L300 80Z" fill="#c9f2a3" stroke="#8fc060" stroke-width="0.700"/>
<path d="M360 85L348 104L352 128L372 150M374 107L352 128M384 138L372 150L362 184" stroke="#7db04a" stroke-width="0.900" fill="none"/>
<path d="M212 93l7-1v9l-7 1zM220 94l8-1 3 12-3 8-8 2zM232 91l5-1 2 7-5 2zM229 126l26-3 3 5-3 16-26 2-2-10zM274 132l5 1 1 7-5 1zM286 63l5 1-1 6-5-1zM381 226l10-2 2 12-10 2zM298 238h20v11h-20zM398 128l5-2v20l-5-2z" fill="#c9f2a3" stroke="#7db04a" stroke-width="0.700"/>
<path d="M345 110l10-2 2 11-10 3zM354 142l10-3 5 12-10 4zM332 148l9-4 5 10-9 4z" fill="#d6d6d6" stroke="#606060" stroke-width="1"/>
<path d="M303 80c8-6 20-4 26 4c6 8 8 16 2 26c-5 9-10 14-16 18l-4-10c-6-2-10-10-10-20c0-8 0-14 2-18z" fill="#7cc05c" stroke="#2f7d1e" stroke-width="1"/>
<path d="M308 84c6-4 14-2 18 4c4 7 4 14 0 21c-3 6-7 9-11 12M312 90c4-3 9-1 11 4c2 5 2 10-1 15c-2 4-5 6-8 8M316 96c3 0 5 4 5 8s-2 9-5 12M306 92c-2 8 0 18 6 24M310 104l4 20M318 110l2 16" stroke="#2f7d1e" stroke-width="1.200" fill="none"/>
<path d="M313 92c3-2 6 0 7 4c1 5 0 10-3 14l-3-4c-2-4-2-10-1-14z" fill="#b8e89a"/>
<path d="M271 58C278 76 286 92 292 112C297 130 298.500 146 298.500 172C298.500 198 297 220 293 252" stroke="#5f9410" stroke-width="9.500" fill="none"/>
<path d="M271 58C278 76 286 92 292 112C297 130 298.500 146 298.500 172C298.500 198 297 220 293 252" stroke="#3a78e8" stroke-width="7" fill="none"/>
<path d="M271 58C278 76 286 92 292 112C297 130 298.500 146 298.500 172C298.500 198 297 220 293 252" stroke="#8fd3ff" stroke-width="5.300" fill="none"/>
<path d="M281 92l8-2M290 143l8 0M292 160l8 0M291 208l8 0M289 230l8 0" stroke="#3a78e8" stroke-width="1.200"/>
</g>
<path d="M261.500 54V255M206 121.500H407" stroke="#f00000" stroke-width="1.300"/>
<rect x="207" y="55" width="12" height="12" fill="#c2d8f4"/><rect x="220" y="55" width="12" height="12" fill="#c2d8f4"/>
<path d="M209.500 57.500l7 7M216.500 57.500l-7 7" stroke="#4f8fe0" stroke-width="2"/>
<path d="M226 56.500v9M221.500 61h9M224.500 58l1.500-1.500 1.500 1.500M224.500 64l1.500 1.500 1.500-1.500M223 59.500l-1.500 1.500 1.500 1.500M229 59.500l1.500 1.500-1.500 1.500" stroke="#4f8fe0" stroke-width="0.900" fill="none"/>
</svg></div>
<svg class="abs" style="left:0;top:110px;width:54px;height:175px" viewBox="206 164 54 175">
<defs><linearGradient id="ng" x1="0" y1="0" x2="0.600" y2="1"><stop offset="0" stop-color="#dde9f9"/><stop offset="1" stop-color="#b3cdee"/></linearGradient></defs>
<path d="M206 165H237C249 166 257 178 257 191C257 197 255.500 201 254 204V300C254 304 251 307 247 307H238C234.500 307 232.500 309 232.500 312V330C232.500 334 229 336.500 225 336.500H206Z" fill="#b6d0ef" fill-opacity="0.880" stroke="#6a9fdc" stroke-width="1.700"/>
<path d="M207 166H216V174C216 175.500 214.500 177 213 177H207Z" fill="#c9dcf5" stroke="#7aa8e0" stroke-width="0.800"/><path d="M209 168.500l4.500 4.500M213.500 168.500l-4.500 4.500" stroke="#5b93d6" stroke-width="1.400"/>
<circle cx="231.400" cy="191" r="23" fill="url(#ng)" stroke="#6a9fdc" stroke-width="1.500"/>
<path d="M231.400 173l5.500 11.500 12 6.500-12 6.500-5.500 11.500-5.500-11.500-12-6.500 12-6.500z" fill="#5f96d8"/><circle cx="231.400" cy="191" r="8.800" fill="#c9dcf5"/>
<circle cx="218" cy="226.5" r="9.500" fill="url(#ng)" stroke="#6a9fdc" stroke-width="1.400"/>
<circle cx="240" cy="226.5" r="9.500" fill="url(#ng)" stroke="#6a9fdc" stroke-width="1.400"/>
<circle cx="240" cy="253" r="9.500" fill="url(#ng)" stroke="#6a9fdc" stroke-width="1.400"/>
<circle cx="240" cy="275" r="9.500" fill="url(#ng)" stroke="#6a9fdc" stroke-width="1.400"/>
<circle cx="240" cy="297" r="9.500" fill="url(#ng)" stroke="#6a9fdc" stroke-width="1.400"/>
<circle cx="218" cy="323.5" r="9.500" fill="url(#ng)" stroke="#6a9fdc" stroke-width="1.400"/>
<path d="M212.500 226.500h11M218 221v11M212.500 323.500h11" stroke="#5f96d8" stroke-width="1.800"/>
<circle cx="240" cy="226.500" r="4.800" fill="none" stroke="#5f96d8" stroke-width="1.600"/><path d="M240 219.500v5M240 228.500v5M233 226.500h5M242 226.500h5" stroke="#5f96d8" stroke-width="1.600"/>
<path d="M234.500 253l9-4.500-2 4.500 2 4.500z" fill="#5f96d8"/><circle cx="240" cy="275" r="3.600" fill="#5f96d8"/><path d="M245.500 297l-9-4.500 2 4.500-2 4.500z" fill="#5f96d8"/>
<rect x="213.500" y="238" width="9" height="74" rx="4.500" fill="#c9dcf5" stroke="#6a9fdc" stroke-width="1.200"/>
<path d="M216 262h4M216 269h4M216 276h4M216 283h4M216 290h4M216 297h4M216 304h4" stroke="#5f96d8" stroke-width="1"/>
<rect x="211.500" y="246" width="13" height="6.500" rx="1.500" fill="#e6f0fb" stroke="#6a9fdc" stroke-width="1.200"/><path d="M214 249.300h8" stroke="#5f96d8" stroke-width="1.200"/>
</svg>
<!--/OVERVIEW-->
</div>
<!--/MAP-->
<!--RIGHT-->
<div id="right" class="abs" style="left:951px;top:54px;width:265px;height:680px;border:1px solid #b0b0b0;background:#fff">
<div class="abs" style="left:2px;top:2px;width:259px;height:26px;border:1px solid #9a9ea8;background:linear-gradient(#fbfdff 0,#e6f0fc 30%,#cfe1f8 62%,#bad5f4 100%);font-weight:bold;font-size:10px;line-height:27px;padding-left:6px">Beschriftung - Mehrfach<svg class="abs" style="left:163px;top:5px;width:92px;height:16px" viewBox="0 0 92 16"><rect x="2" y="10.500" width="8" height="2.200" fill="#4f8ad2"/><path d="M29.500 4h6v5h-6z" fill="none" stroke="#4f8ad2" stroke-width="1"/><rect x="29" y="3" width="7" height="2" fill="#4f8ad2"/><path d="M27.500 7.500h5.500v4.500h-5.500z" fill="#e3eefb" stroke="#4f8ad2" stroke-width="1"/><rect x="27" y="6.500" width="6.500" height="1.800" fill="#4f8ad2"/><path d="M52.500 5.500l7 7M59.500 5.500l-7 7" stroke="#4f8ad2" stroke-width="1.500"/><g transform="translate(77.500 3)"><path d="M1.500 5V.5h4V5" stroke="#4f8ad2" stroke-width="1" fill="#eaf2fc"/><rect x="4" y="0" width="2" height="5.500" fill="#4f8ad2"/><rect x="0" y="5" width="7" height="1.300" fill="#4f8ad2"/><rect x="3" y="6" width="1.200" height="3" fill="#4f8ad2"/></g></svg></div>
<div class="abs" style="left:2px;top:30px;width:259px;height:647px;border:1px solid #a8a8a8"><div class="abs" style="left:0;top:0;width:257px;height:584px;overflow:hidden">
<div class="abs" style="left:4px;top:5px;line-height:12px;white-space:nowrap;">Beschriftungsthema</div>
<div class="abs" style="left:4px;top:16px;width:242px;height:18px;border:1px solid #d6d6d6;border-top-color:#8f8f8f;border-left-color:#b4b4b4;background:#fff;line-height:17px;padding-left:3px;white-space:nowrap">Kanäle - Mischwassersystem<i class="abs" style="right:4px;top:5px;width:0;height:0;border-left:5px solid transparent;border-right:5px solid transparent;border-top:6px solid #3a6fd0"></i></div>
<div class="abs" style="left:4px;top:35px;line-height:12px;white-space:nowrap;">Beschriftungskonfiguration</div>
<div class="abs" style="left:4px;top:46px;width:242px;height:18px;border:1px solid #d6d6d6;border-top-color:#8f8f8f;border-left-color:#b4b4b4;background:#fff;line-height:17px;padding-left:3px;white-space:nowrap">Kanäle - Mischwassersystem<i class="abs" style="right:4px;top:5px;width:0;height:0;border-left:5px solid transparent;border-right:5px solid transparent;border-top:6px solid #3a6fd0"></i></div>
<div class="abs" style="left:4px;top:65px;line-height:12px;white-space:nowrap;">Beschriftungsstile</div>
<div class="abs" style="left:4px;top:76px;width:242px;height:18px;border:1px solid #d6d6d6;border-top-color:#8f8f8f;border-left-color:#b4b4b4;background:#fff;line-height:17px;padding-left:3px;white-space:nowrap">Stil B<i class="abs" style="right:4px;top:5px;width:0;height:0;border-left:5px solid transparent;border-right:5px solid transparent;border-top:6px solid #3a6fd0"></i></div>
<div class="abs" style="left:4px;top:104px;width:241px;height:1px;background:#a9c9f0"></div>
<div class="abs" style="left:4px;top:112px;line-height:12px;white-space:nowrap;font-weight:bold;">Verfügbare Beschriftungsfelder</div>
<div class="abs" style="left:230px;top:110px;width:15px;height:14px;background:linear-gradient(#fbe79a,#f3c84e);border:1px solid #c9d6e8;border-right-color:#6d7f99;border-bottom-color:#6d7f99"><svg viewBox="0 0 14 13" style="position:absolute;left:0;top:0;width:14px;height:13px"><path d="M4 6.500l3-2.500 3 2.500M4 10l3-2.500 3 2.500" stroke="#1a2a55" stroke-width="1.300" fill="none"/></svg></div>
<div class="abs" style="left:4px;top:136px;line-height:12px;white-space:nowrap;">Feldnamen</div>
<div class="abs" style="left:63px;top:135px;width:13px;height:13px;border:1px solid #6b6b6b;background:#fff"></div>
<div class="abs" style="left:133px;top:140px;line-height:12px;white-space:nowrap;">Trennzeichen</div>
<div class="abs" style="left:204px;top:133px;width:41px;height:18px;border:1px solid #d2d2d2;background:#fff;line-height:17px;padding-left:3px;white-space:nowrap"><i class="abs" style="right:4px;top:5px;width:0;height:0;border-left:5px solid transparent;border-right:5px solid transparent;border-top:6px solid #3a6fd0"></i></div>
<div class="abs" style="left:4px;top:159px;width:233px;height:365px;border:1px solid #a9c9f0;background:#fff"></div>
<div class="abs" style="left:4px;top:159px;width:232px;height:21px;border:1px solid #8db2e3;background:linear-gradient(#e4eefb,#cfe0f8);line-height:20px"><div class="abs" style="left:0;top:0;width:20px;height:19px;border-right:1px solid #9dbfe9;background:#d5e4f8"></div><span class="abs" style="left:23px">Beschriftung</span></div>
<div class="abs" style="left:5px;top:180px;width:231px;height:20px;border-bottom:1px solid #bcd6f4;line-height:19px"><div class="abs" style="left:19px;top:0;width:1px;height:19px;background:#bcd6f4"></div><div class="abs" style="left:3px;top:3px;width:13px;height:13px;border:1px solid #6b6b6b;background:#fff"><svg viewBox="0 0 11 11" style="position:absolute;left:0;top:0;width:11px;height:11px"><path d="M2 5.500l2.300 2.500L9 2.500" stroke="#222" stroke-width="1.300" fill="none"/></svg></div><span class="abs" style="left:25px">Status</span></div>
<div class="abs" style="left:5px;top:200px;width:231px;height:20px;border-bottom:1px solid #bcd6f4;line-height:19px"><div class="abs" style="left:19px;top:0;width:1px;height:19px;background:#bcd6f4"></div><div class="abs" style="left:3px;top:3px;width:13px;height:13px;border:1px dotted #333;background:#fff"><svg viewBox="0 0 11 11" style="position:absolute;left:0;top:0;width:11px;height:11px"><path d="M2 5.500l2.300 2.500L9 2.500" stroke="#222" stroke-width="1.300" fill="none"/></svg></div><span class="abs" style="left:25px">Kanalart</span></div>
<div class="abs" style="left:236px;top:160px;width:17px;height:346px;background:#f4f4f4"></div>
<svg class="abs" style="left:236px;top:160px;width:17px;height:346px" viewBox="0 0 17 346"><path d="M3.500 24l5-5 5 5M3.500 320.500l5 5 5-5" stroke="#c4c4c4" stroke-width="2.600" fill="none"/></svg>
<div class="abs" style="left:236px;top:506px;width:17px;height:17px;background:#e6e6f5"></div>
<div class="abs" style="left:4px;top:529px;width:241px;height:1px;background:#a9c9f0"></div>
<div class="abs" style="left:4px;top:537px;line-height:12px;white-space:nowrap;font-weight:bold;">Vorhandene Beschriftungen</div>
<div class="abs" style="left:230px;top:535px;width:15px;height:14px;background:linear-gradient(#e4eefb,#c7daf3);border:1px solid #c9d6e8;border-right-color:#6d7f99;border-bottom-color:#6d7f99"><svg viewBox="0 0 14 13" style="position:absolute;left:0;top:0;width:14px;height:13px"><path d="M4 4l3 2.500 3-2.500M4 7.500l3 2.500 3-2.500" stroke="#1a2a55" stroke-width="1.300" fill="none"/></svg></div>
<div class="abs" style="left:4px;top:559px;width:241px;height:1px;background:#a9c9f0"></div>
<div class="abs" style="left:4px;top:565px;width:73px;height:24px;background:#cfe0f8;border:1px solid #a9c9f0;line-height:25px;padding-left:23px">Drucken<div class="abs" style="left:4px;top:3px;width:15px;height:15px;border:1px solid #5b8fd6;border-radius:3px;background:linear-gradient(#dbe9fb,#a9c8f0)"><svg viewBox="0 0 13 13" style="position:absolute;left:0;top:0;width:13px;height:13px"><path d="M2.500 6.500h7M6.500 3.500l3 3-3 3" stroke="#fff" stroke-width="1.600" fill="none"/></svg></div></div>
<div class="abs" style="left:129px;top:565px;width:91px;height:24px;background:#cfe0f8;border:1px solid #a9c9f0;line-height:25px;padding-left:23px">Verschicken<div class="abs" style="left:4px;top:3px;width:15px;height:15px;border:1px solid #5b8fd6;border-radius:3px;background:linear-gradient(#dbe9fb,#a9c8f0)"><svg viewBox="0 0 13 13" style="position:absolute;left:0;top:0;width:13px;height:13px"><path d="M2.500 6.500h7M6.500 3.500l3 3-3 3" stroke="#fff" stroke-width="1.600" fill="none"/></svg></div></div>
</div></div>
<svg class="abs" style="right:0;bottom:0;width:10px;height:10px" viewBox="0 0 10 10"><path d="M9 2L2 9M9 5L5 9M9 8L8 9" stroke="#9aa4b5" stroke-width="1"/></svg>
</div>
<!--/RIGHT-->
<!--BOTTOM-->
<div id="bot" class="abs">
<div class="abs" style="left:2px;top:2px;width:128px;height:22px;background:linear-gradient(#fdcb84,#fbb04e);line-height:22px;padding-left:22px;white-space:nowrap">Beschriftung - Me...<svg class="abs" style="left:3px;top:4px;width:17px;height:14px" viewBox="0 0 17 14"><rect x="0.500" y="0.500" width="16" height="13" fill="#fff" stroke="#333" stroke-width="1"/><rect x="1" y="1" width="15" height="2.500" fill="#2c56a8"/></svg></div>
<svg class="abs" style="left:847px;top:8px;width:10px;height:10px" viewBox="0 0 10 10"><circle cx="5" cy="5" r="3.600" fill="#3fc43a" stroke="#8fd98a" stroke-width="1.200"/><circle cx="4.200" cy="4" r="1.300" fill="#a8f0a0"/></svg>
<div class="abs" style="left:945px;top:7px;line-height:14px;color:#5c92cf;white-space:nowrap">Einstellungen</div><div class="dd" style="left:1019px;top:11px;border-top-color:#6c98cf"></div>
<div class="abs" style="left:1039px;top:7px;line-height:14px;color:#5c92cf;white-space:nowrap">Kartenausschnitte</div><div class="dd" style="left:1137px;top:11px;border-top-color:#6c98cf"></div>
<svg class="abs" style="left:1174px;top:4px;width:20px;height:20px" viewBox="0 0 20 20"><path d="M3 17L17 3" stroke="#2a5fb0" stroke-width="1"/><rect x="-3.500" y="-2.600" width="9" height="5.200" rx="2.600" transform="translate(7.500 12.500) rotate(-45)" fill="none" stroke="#2a5fb0" stroke-width="1.400"/><rect x="-4.500" y="-2.600" width="9" height="5.200" rx="2.600" transform="translate(13 7) rotate(-45)" fill="none" stroke="#2a5fb0" stroke-width="1.400"/></svg>
<svg class="abs" style="left:1199px;top:3px;width:18px;height:21px" viewBox="0 0 18 21"><path d="M1 21c0-5 3-7 8-7s8 2 8 7z" fill="#f09a3a"/><path d="M6 14l3 4 3-4z" fill="#fff"/><ellipse cx="9" cy="8.500" rx="4.600" ry="5.200" fill="#e9b98c"/><path d="M4 8c-.5-5 2-7 5-7s5.500 2 5 7c-1-2.500-2-3.500-5-3.500S5 5.500 4 8z" fill="#5a3a20"/></svg>
</div>
<!--/BOTTOM-->
</body>
</html>
